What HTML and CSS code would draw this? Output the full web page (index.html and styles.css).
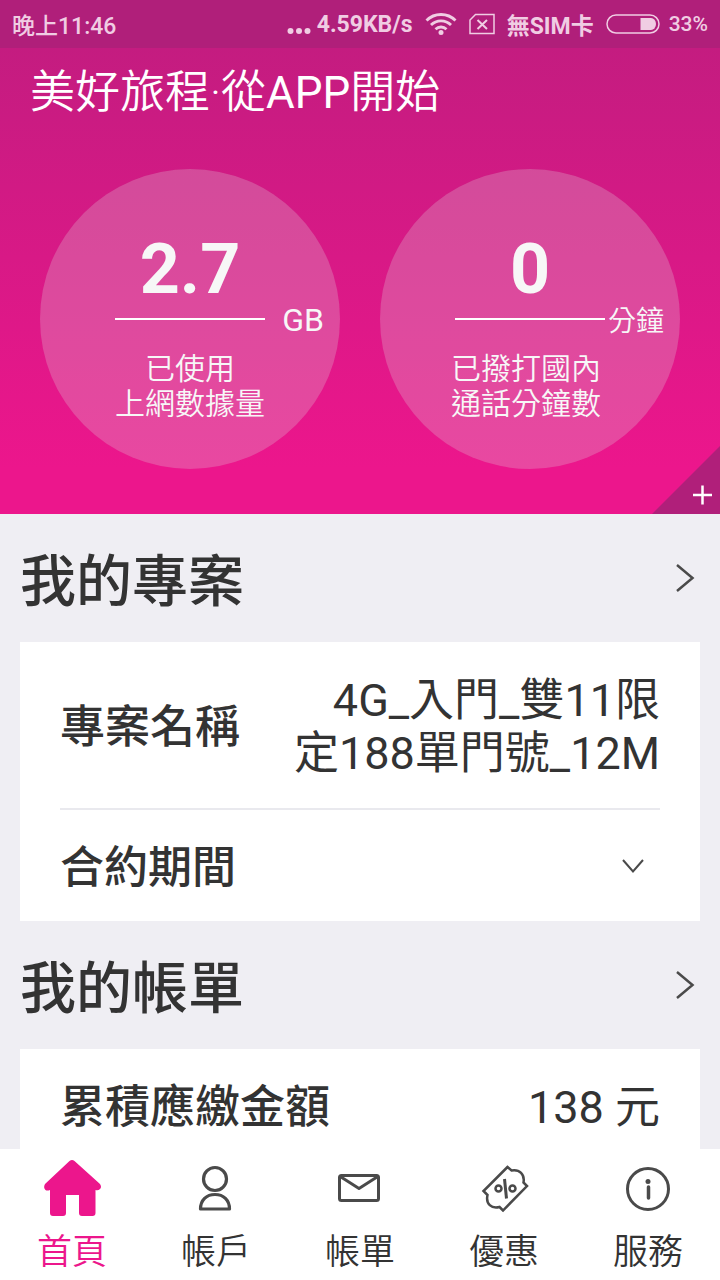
FILE: index.html
```html
<!DOCTYPE html>
<html lang="zh-Hant">
<head>
<meta charset="utf-8">
<meta name="viewport" content="width=device-width, initial-scale=1">
<title>首頁</title>
<link rel="stylesheet" href="styles.css">
</head>
<body>
<div class="app">
  <div class="status">
    <span class="status-time">晚上11:46</span>
    <svg class="status-dots" width="24" height="24" viewBox="0 0 24 24" fill="currentColor"><circle cx="3.500" cy="19" r="3"/><circle cx="12" cy="19" r="3"/><circle cx="20.500" cy="19" r="3"/></svg>
    <span class="status-speed">4.59KB/s</span>
    <svg class="status-wifi" width="32" height="24" viewBox="0 0 32 24" fill="none" stroke="currentColor" stroke-width="2.800"><path d="M1.500 8.500a20.500 20.500 0 0 1 29 0M6 13a14 14 0 0 1 20 0M10.500 17.200a8 8 0 0 1 11 0"/><circle cx="16" cy="20.500" r="2.500" fill="currentColor" stroke="none"/></svg>
    <svg class="status-sim" width="26" height="22" viewBox="0 0 26 22" fill="none" stroke="currentColor" stroke-width="1.500"><path d="M6.500 1.500H25v19H1V7z"/><path d="M8.500 7l9.500 9M18 7l-9.500 9" stroke-width="2"/></svg>
    <span class="status-carrier">無SIM卡</span>
    <svg class="status-battery" width="54" height="20" viewBox="0 0 54 20"><rect x="1" y="1" width="52" height="18" rx="9" fill="none" stroke="currentColor" stroke-width="1.500"/><path d="M34.500 4H45a5 6 0 0 1 0 12H34.500z" fill="currentColor"/></svg>
    <span class="status-percent">33%</span>
  </div>

  <header class="hero">
    <h1 class="hero-title">美好旅程·從<span class="latin">APP</span>開始</h1>
    <div class="gauges">
      <div class="gauge">
        <strong class="gauge-value">2.7</strong>
        <div class="gauge-rule"><span class="gauge-line"></span><span class="gauge-unit gauge-unit-latin">GB</span></div>
        <p class="gauge-label">已使用<br>上網數據量</p>
      </div>
      <div class="gauge">
        <strong class="gauge-value">0</strong>
        <div class="gauge-rule"><span class="gauge-line"></span><span class="gauge-unit">分鐘</span></div>
        <p class="gauge-label gauge-label-wide">已撥打國內<br>通話分鐘數</p>
      </div>
    </div>
    <button class="corner" type="button" aria-label="新增"><svg width="68" height="68" viewBox="0 0 68 68"><path d="M68 0v68H0z" fill="#b01f7a"/><path d="M50.500 39.500v19M41 49h19" stroke="#fff" stroke-width="2.500"/></svg></button>
  </header>

  <main class="content">
    <section>
      <a class="section-head" href="#plan"><h2 class="section-title">我的專案</h2>
        <svg width="20" height="30" viewBox="0 0 20 30" fill="none" stroke="#4a4a4a" stroke-width="2.500"><path d="M2 2l15.500 13L2 28"/></svg></a>
      <div class="card">
        <div class="row row-plan"><span class="row-label">專案名稱</span><span class="row-value">4G_入門_雙11限定188單門號_12M</span></div>
        <button class="row row-term" type="button"><span class="row-label">合約期間</span>
          <svg class="row-chevron" width="24" height="16" viewBox="0 0 24 16" fill="none" stroke="#4a4a4a" stroke-width="2"><path d="M2 2l10 11.500L22 2"/></svg></button>
      </div>
    </section>
    <section>
      <a class="section-head" href="#bill"><h2 class="section-title">我的帳單</h2>
        <svg width="20" height="30" viewBox="0 0 20 30" fill="none" stroke="#4a4a4a" stroke-width="2.500"><path d="M2 2l15.500 13L2 28"/></svg></a>
      <div class="card">
        <div class="row row-bill"><span class="row-label">累積應繳金額</span><span class="row-value">138 元</span></div>
      </div>
    </section>
  </main>

  <nav class="tabs">
    <a class="tab tab-active" href="#home">
      <svg width="60" height="60" viewBox="0 0 60 60" fill="#ec168c"><path d="M27.500 2q2.500-2 5 0L58 25q2 3 0 5-2 2-4.500 1V54q0 3-3 3H40q-3 0-3-3V36H24v18q0 3-3 3H11q-3 0-3-3V31q-3 1-4.500 0-2.500-2.500-.5-6z"/></svg>
      <span>首頁</span></a>
    <a class="tab" href="#account">
      <svg width="60" height="60" viewBox="0 0 60 60" fill="none" stroke="#4a4a4a" stroke-width="3.200"><circle cx="29" cy="20" r="11.500"/><path d="M14.500 50c0-9 6-14.500 14.500-14.500s14.500 5.500 14.500 14.500z" stroke-linejoin="round"/></svg>
      <span>帳戶</span></a>
    <a class="tab" href="#bills">
      <svg width="60" height="60" viewBox="0 0 60 60" fill="none" stroke="#4a4a4a" stroke-width="3"><rect x="9.500" y="16.500" width="39" height="25" rx="2"/><path d="M11 18l18 11.500L47 18" stroke-linejoin="round"/></svg>
      <span>帳單</span></a>
    <a class="tab" href="#offers">
      <svg width="60" height="60" viewBox="0 0 60 60" fill="none" stroke="#4a4a4a" stroke-width="2.500"><path d="M33.500 8L9.500 32l4 4c-2 9 4 14 12 12l3.500 3.500L53 27l-3.500-3.500c1.500-8-4-13.500-12-12z"/><path d="M30.500 20l2 19.500" stroke-width="3"/><circle cx="24.500" cy="29.500" r="3" stroke-width="2.500"/><circle cx="38.500" cy="29.500" r="3" stroke-width="2.500"/></svg>
      <span>優惠</span></a>
    <a class="tab" href="#service">
      <svg width="60" height="60" viewBox="0 0 60 60" fill="none" stroke="#4a4a4a" stroke-width="3"><circle cx="30" cy="30" r="20.500"/><path d="M30.500 28v11" stroke-width="3.500" stroke-linecap="round"/><circle cx="30" cy="22.500" r="2.500" fill="#4a4a4a" stroke="none"/></svg>
      <span>服務</span></a>
  </nav>
</div>
</body>
</html>
```
FILE: styles.css
```css
* { box-sizing: border-box; }
body {
  margin: 0;
  font-family: Roboto, "Noto Sans CJK TC", sans-serif;
  color: #333;
  background: #efeef3;
}
h1, h2, p { margin: 0; font-weight: inherit; }
a { color: inherit; text-decoration: none; }
button { font: inherit; color: inherit; border: 0; background: none; padding: 0; cursor: pointer; }
svg { display: block; flex: none; }

.app { height: 100vh; display: flex; flex-direction: column; overflow: hidden; }

.status {
  flex: none;
  height: 48px;
  padding: 0 12px;
  display: flex;
  align-items: center;
  background: #b01f7a;
  color: #f0cde3;
  font-size: 23px;
  font-weight: 500;
  white-space: nowrap;
}
.status-time { margin-right: auto; }
.status-speed { margin-left: 6px; font-weight: 700; }
.status-wifi { margin-left: 12px; }
.status-sim { margin-left: 12px; }
.status-carrier { margin-left: 12px; font-weight: 700; }
.status-battery { margin-left: 12px; }
.status-percent { margin-left: 9px; font-size: 21px; }

.hero {
  position: relative;
  flex: none;
  padding: 12px 40px 45px;
  background: linear-gradient(#c41c80, #ec168c 90%);
  color: #fff;
}
.hero-title { margin: 0 -10px; font-size: 45px; line-height: 66px; font-weight: 350; }
.latin { font-size: 44px; line-height: 44px; font-weight: 400; }
.gauges { display: flex; justify-content: space-between; margin-top: 43px; }
.gauge {
  width: 300px;
  height: 300px;
  padding-top: 60px;
  border-radius: 50%;
  background: rgba(225, 225, 225, 0.25);
  color: #f7f7f7;
  text-align: center;
}
.gauge-value { display: block; font-size: 70px; line-height: 80px; font-weight: 700; }
.gauge-rule {
  display: grid;
  grid-template: 20px / 75px 150px 1fr;
  align-items: center;
  padding-right: 16px;
}
.gauge-line { grid-column: 2; height: 2px; background: #fff; }
.gauge-unit { align-self: start; font-size: 28px; line-height: 26px; text-align: right; font-weight: 350; white-space: nowrap; }
.gauge-unit-latin { font-size: 32px; line-height: 22px; font-weight: 400; }
.gauge-label { margin-top: 22px; font-size: 30px; line-height: 35px; font-weight: 350; }
.gauge-label-wide { padding-right: 8px; }
.corner { position: absolute; right: 0; bottom: 0; }

.content { flex: 1; min-height: 0; overflow: hidden; padding: 0 20px; }
.section-head {
  height: 128px;
  padding-right: 5px;
  display: flex;
  align-items: center;
  justify-content: space-between;
}
.section-title { padding-top: 8px; font-size: 56px; line-height: 64px; font-weight: 500; }
.card { padding: 0 40px; background: #fff; }
.row { display: flex; align-items: center; justify-content: space-between; width: 100%; font-size: 45px; line-height: 53px; }
.row-plan { padding: 32px 0 28px; border-bottom: 2px solid #e9e9ee; }
.row-term { padding: 32px 0 26px; font-size: 44px; }
.row-bill { padding: 32px 0; }
.row-label { flex: none; font-weight: 500; }
.row-value { max-width: 370px; text-align: right; font-weight: 400; word-break: break-all; }
.row-chevron { margin: 0 15px 6px 0; }

.tabs { flex: none; height: 131px; display: flex; background: #fff; }
.tab {
  flex: 1;
  padding-top: 10px;
  display: flex;
  flex-direction: column;
  align-items: center;
  font-size: 35px;
  line-height: 48px;
  gap: 10px;
  font-weight: 350;
}
.tab-active { color: #ec168c; }
```
